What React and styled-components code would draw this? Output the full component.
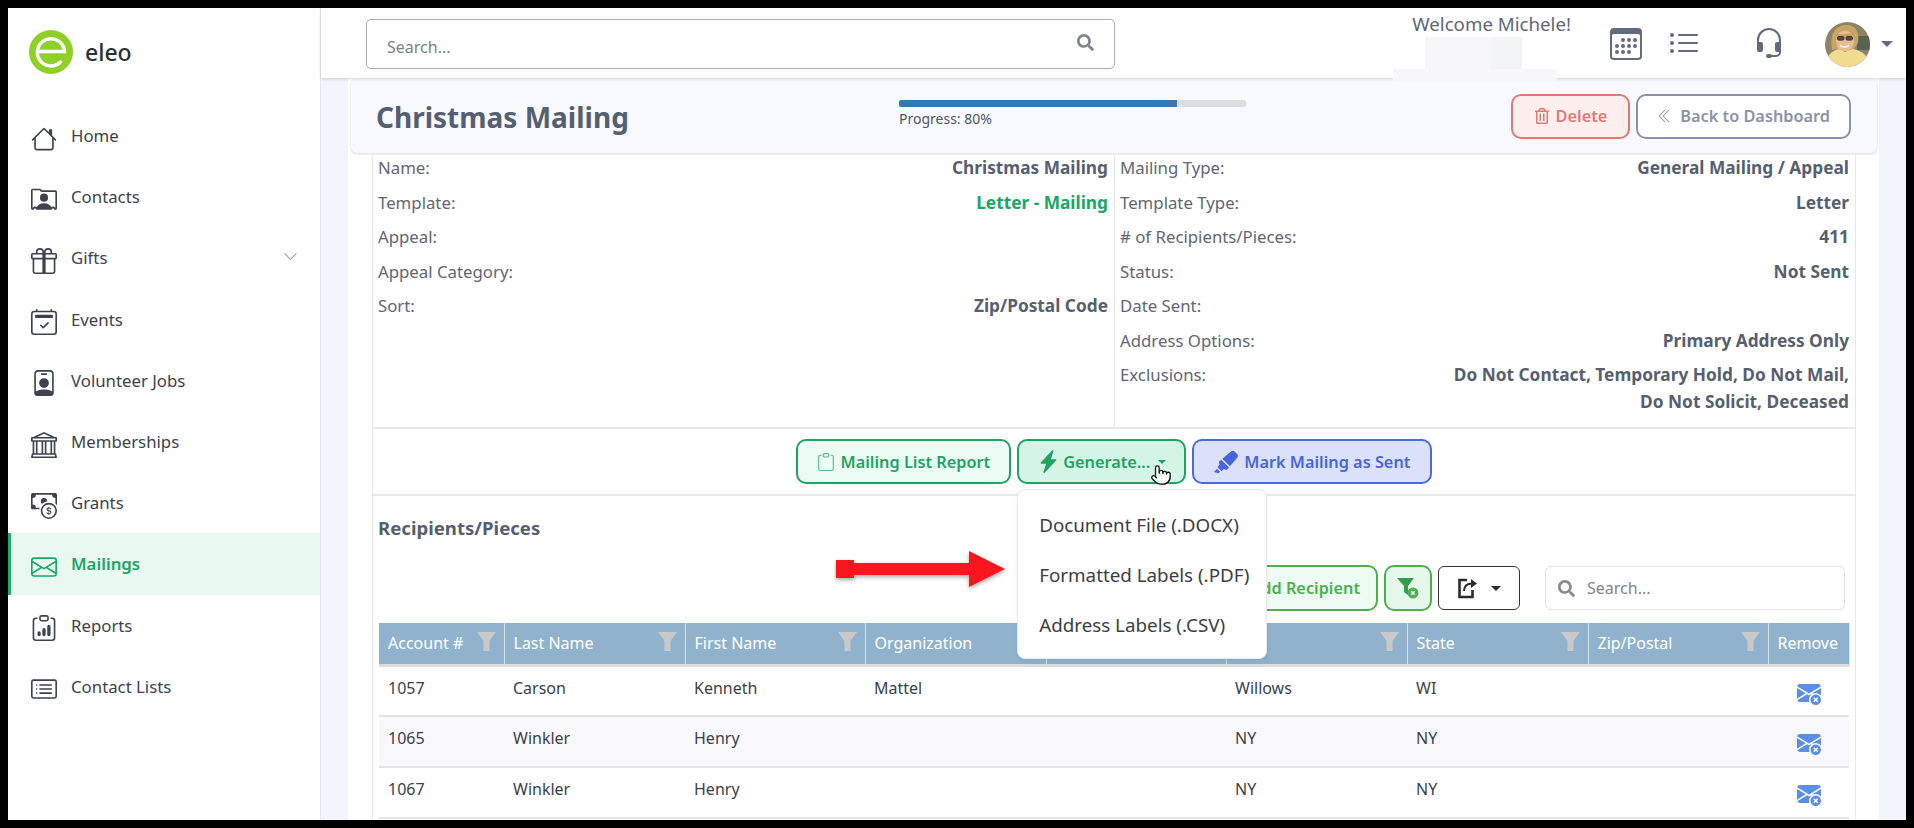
import React from 'react';
import styled, { createGlobalStyle } from 'styled-components';
import { Pointer } from 'lucide-react';
import {
  BsHouse,
  BsPersonRolodex,
  BsGift,
  BsCalendar2Check,
  BsPersonBadge,
  BsBank,
  BsCashCoin,
  BsEnvelope,
  BsClipboardData,
  BsCardList,
  BsChevronDown,
  BsCalendar3,
  BsListUl,
  BsHeadset,
  BsChevronDoubleLeft,
  BsClipboard,
  BsEnvelopeXFill,
  BsLightningChargeFill,
} from 'react-icons/bs';
import { FaSearch, FaRegTrashAlt, FaHighlighter } from 'react-icons/fa';

const GlobalStyle = createGlobalStyle`
  html, body {
    margin: 0;
    height: 100%;
    background: #000;
    overflow: hidden;
  }
  body {
    padding: 8px;
    box-sizing: border-box;
    font-family: "Noto Sans", "Open Sans", sans-serif;
    font-size: 16px;
    color: #5f6675;
  }
  * { box-sizing: border-box; }
`;

const Frame = styled.div`
  width: 1898px;
  height: 812px;
  display: flex;
  overflow: hidden;
  background: #f3f4fc;
`;

const Sidebar = styled.aside`
  width: 313px;
  flex: none;
  background: #fff;
  border-right: 1px solid #e6e7ee;
`;

const Brand = styled.div`
  height: 97px;
  display: flex;
  align-items: center;
  gap: 12px;
  padding: 0 0 9px 21px;
  font-size: 23px;
  font-weight: 500;
  color: #2b2f3a;
`;

const NavItem = styled.div`
  height: 61.2px;
  display: flex;
  align-items: center;
  gap: 14px;
  padding: 0 22px 0 23px;
  font-size: 16.8px;
  color: ${(p) => (p.$active ? '#18a765' : '#3d424e')};
  font-weight: ${(p) => (p.$active ? 600 : 400)};
  background: ${(p) => (p.$active ? '#e9f9f1' : 'transparent')};
  box-shadow: ${(p) => (p.$active ? 'inset 3px 0 0 #1fad66' : 'none')};

  > span {
    flex: 1;
  }
  > svg:first-child {
    margin-top: 6px;
  }
  > svg:last-child {
    margin-top: -2px;
  }
`;

const Main = styled.div`
  flex: 1;
  min-width: 0;
  display: flex;
  flex-direction: column;
`;

const Topbar = styled.header`
  position: relative;
  z-index: 2;
  height: 70px;
  flex: none;
  display: flex;
  align-items: center;
  padding: 2px 13px 0 45px;
  background: #fff;
  box-shadow: 0 1px 3px rgba(0, 0, 0, 0.16);
`;

const SearchBox = styled.div`
  width: 749px;
  height: 50px;
  display: flex;
  align-items: center;
  justify-content: space-between;
  padding: 5px 20px 0 20px;
  border: 1px solid #a9acb5;
  border-radius: 5px;
  color: #7a7f8a;

  svg {
    color: #7c8594;
    margin-top: -8px;
  }
`;

const UserArea = styled.div`
  margin-left: auto;
  align-self: stretch;
  display: flex;
  align-items: center;
  color: #5f6675;
`;

const Welcome = styled.div`
  align-self: flex-start;
  margin-top: 2px;
  margin-right: 39px;
  font-size: 18.7px;
  line-height: 24px;
`;

const TopIcon = styled.div`
  display: flex;
  margin-right: ${(p) => p.$gap}px;
  color: #626b7b;
`;

const Caret = styled.span`
  width: 0;
  height: 0;
  margin-left: ${(p) => p.$ml || 0}px;
  border-left: ${(p) => p.$size || 5}px solid transparent;
  border-right: ${(p) => p.$size || 5}px solid transparent;
  border-top: ${(p) => p.$size || 5}px solid ${(p) => p.$color || 'currentColor'};
`;

/* the smudges left in the picture where something was blanked out */
const Patch = styled.div`
  position: absolute;
  left: ${(p) => p.$x}px;
  top: ${(p) => p.$y}px;
  width: ${(p) => p.$w}px;
  height: ${(p) => p.$h}px;
  background: ${(p) => p.$c};
`;

const Content = styled.main`
  flex: 1;
  min-height: 0;
  padding: 0 27px;
  overflow: hidden;
`;

const Panel = styled.div`
  background: #fff;
  height: 100%;
  padding-top: 1px;
`;

const HeaderCard = styled.div`
  height: 74px;
  margin: 0 2px 0 3px;
  display: grid;
  grid-template-columns: 523px 347px 1fr;
  align-items: center;
  padding-left: 25px;
  padding-right: 26px;
  background: #f8f9fe;
  border-radius: 6px;
  box-shadow: 0 1px 3px rgba(0, 0, 0, 0.16);
`;

const Title = styled.h1`
  margin: 2px 0 0;
  font-size: 28px;
  font-weight: 700;
  color: #565f70;
`;

const Progress = styled.div`
  font-size: 14px;
  line-height: 19px;
  color: #4f5562;
  padding-bottom: 5px;
`;

const Track = styled.div`
  height: 7px;
  margin-bottom: 2px;
  background: #dcdde1;
  border-radius: 2px;
  overflow: hidden;

  div {
    height: 100%;
    background: #3378b5;
  }
`;

const HeaderActions = styled.div`
  display: flex;
  justify-content: flex-end;
  gap: 6px;
`;

const Button = styled.button`
  height: ${(p) => p.$h || 45}px;
  padding: 0 ${(p) => p.$px || 16}px;
  display: inline-flex;
  align-items: center;
  justify-content: center;
  gap: ${(p) => p.$gap || 6}px;
  border: 2px solid ${(p) => p.$line};
  border-radius: 10px;
  background: ${(p) => p.$bg};
  color: ${(p) => p.$ink};
  font-family: inherit;
  font-size: 16.3px;
  font-weight: 600;
  white-space: nowrap;
`;

const Inner = styled.div`
  margin: 0 23px 0 24px;
  border-left: 1px solid #e6e7ec;
  border-right: 1px solid #e6e7ec;
`;

const Details = styled.div`
  display: grid;
  grid-template-columns: 741px 1fr;
  height: 276px;
  border-bottom: 2px solid #e8e8ee;
`;

const DetailCol = styled.div`
  padding: 1px 6px 0 5px;
  border-left: ${(p) => (p.$divided ? '1px solid #e6e7ec' : 'none')};
`;

const DetailRow = styled.div`
  display: flex;
  justify-content: space-between;
  gap: 20px;
  line-height: 27px;
  margin-bottom: 7.5px;
`;

const Label = styled.span`
  font-size: 16.8px;
  color: #5f6675;
  white-space: nowrap;
`;

const Value = styled.span`
  font-size: 17.3px;
  font-weight: 700;
  text-align: right;
  color: ${(p) => (p.$green ? '#18a765' : '#565f70')};
`;

const ActionRow = styled.div`
  height: 67px;
  display: flex;
  justify-content: center;
  align-items: center;
  gap: 6px;
  border-bottom: 2px solid #e8e8ee;
`;

const GenerateWrap = styled.div`
  position: relative;
  z-index: 1;
`;

const HandCursor = styled.div`
  position: absolute;
  left: 133px;
  top: 25px;
  display: flex;
`;

const Dropdown = styled.div`
  position: absolute;
  left: 0;
  top: 50px;
  width: 250px;
  height: 170px;
  padding: 10px 0 0 21px;
  background: #fff;
  border: 1px solid #e8e8ee;
  border-radius: 8px;
  box-shadow: 0 2px 5px rgba(0, 0, 0, 0.06);
  font-size: 18.8px;
  color: #3a3e47;
`;

const DropItem = styled.div`
  height: 50px;
  line-height: 50px;
  white-space: nowrap;
`;

const Section = styled.section`
  position: relative;
  padding: 18px 6px 0 6px;
`;

const SectionTitle = styled.div`
  font-size: 18.6px;
  font-weight: 700;
  line-height: 27px;
  color: #565f70;
  margin-left: -1px;
`;

const Toolbar = styled.div`
  margin-top: 24px;
  padding-right: 4px;
  height: 46px;
  display: flex;
  justify-content: flex-end;
  align-items: center;
  gap: 6px;
`;

const ArrowMark = styled.svg`
  position: absolute;
  left: 461px;
  top: 53px;
`;

const ExportButton = styled.button`
  width: 82px;
  height: 44px;
  display: flex;
  align-items: center;
  justify-content: center;
  gap: 12px;
  border: 1px solid #333;
  border-radius: 6px;
  background: #fff;
  color: #2b2b2b;
`;

const TableSearch = styled.div`
  width: 300px;
  height: 44px;
  margin-left: 19px;
  display: flex;
  align-items: center;
  gap: 12px;
  padding-left: 12px;
  border: 1px solid #e2e2e6;
  border-radius: 6px;
  color: #7f838c;
`;

const Table = styled.table`
  width: 1470px;
  margin-top: 12px;
  table-layout: fixed;
  border-collapse: collapse;
`;

const Th = styled.th`
  width: ${(p) => p.$w}px;
  height: 42px;
  padding: 0 9px;
  background: #90b2cc;
  border-right: 1px solid #d5e0ea;
  border-bottom: 3px solid #dddddf;
  color: #fff;
  font-weight: 400;
  text-align: left;
  white-space: nowrap;

  div {
    display: flex;
    align-items: center;
    justify-content: space-between;
  }
  svg {
    margin-right: -1px;
    margin-top: -4px;
  }
`;

const Td = styled.td`
  height: 51px;
  padding: 8px 9px 0;
  vertical-align: top;
  line-height: 27px;
  color: #3a3f4c;
  white-space: nowrap;
  text-align: ${(p) => (p.$center ? 'center' : 'left')};
  border-bottom: 2px solid #e4e4e8;

  svg {
    color: #5b8ee6;
    margin-top: 6px;
    display: inline-block;
  }
`;

const Tr = styled.tr`
  background: ${(p) => (p.$alt ? '#f9f9fb' : '#fff')};
`;

const navItems = [
  { label: 'Home', icon: BsHouse },
  { label: 'Contacts', icon: BsPersonRolodex },
  { label: 'Gifts', icon: BsGift, more: true },
  { label: 'Events', icon: BsCalendar2Check },
  { label: 'Volunteer Jobs', icon: BsPersonBadge },
  { label: 'Memberships', icon: BsBank },
  { label: 'Grants', icon: BsCashCoin },
  { label: 'Mailings', icon: BsEnvelope, active: true },
  { label: 'Reports', icon: BsClipboardData },
  { label: 'Contact Lists', icon: BsCardList },
];

const leftDetails = [
  ['Name:', 'Christmas Mailing'],
  ['Template:', 'Letter - Mailing', true],
  ['Appeal:', ''],
  ['Appeal Category:', ''],
  ['Sort:', 'Zip/Postal Code'],
];

const rightDetails = [
  ['Mailing Type:', 'General Mailing / Appeal'],
  ['Template Type:', 'Letter'],
  ['# of Recipients/Pieces:', '411'],
  ['Status:', 'Not Sent'],
  ['Date Sent:', ''],
  ['Address Options:', 'Primary Address Only'],
];

const columns = [
  ['Account #', 125],
  ['Last Name', 181],
  ['First Name', 180],
  ['Organization', 181],
  ['', 180],
  ['City', 181],
  ['State', 181],
  ['Zip/Postal', 180],
  ['Remove', 81],
];

const rows = [
  ['1057', 'Carson', 'Kenneth', 'Mattel', '', 'Willows', 'WI', ''],
  ['1065', 'Winkler', 'Henry', '', '', 'NY', 'NY', ''],
  ['1067', 'Winkler', 'Henry', '', '', 'NY', 'NY', ''],
];

function Logo() {
  return (
    <svg width="44" height="44" viewBox="0 0 44 44">
      <circle cx="22" cy="22" r="22" fill="#8ed124" />
      <path
        d="M8.5 21.5H35.5A13.6 13.6 0 1 0 31.5 32"
        fill="none"
        stroke="#fff"
        strokeWidth="3.4"
        strokeLinecap="round"
      />
    </svg>
  );
}

function Avatar() {
  return (
    <svg width="45" height="45" viewBox="0 0 45 45">
      <clipPath id="avatar-clip">
        <circle cx="22.5" cy="22.5" r="22.5" />
      </clipPath>
      <g clipPath="url(#avatar-clip)">
        <rect width="45" height="45" fill="#8a8468" />
        <rect x="32" y="14" width="13" height="14" fill="#5a6350" />
        <path d="M7 28C4 10 12 3 21 3s14 6 12 18l-4 6H12z" fill="#c9a564" />
        <ellipse cx="20" cy="19" rx="9" ry="10.5" fill="#e8bd96" />
        <path d="M11 13c4 1 12 1 17-1" stroke="#c9a564" strokeWidth="3" fill="none" />
        <rect x="12.5" y="14.5" width="6.5" height="3.6" rx="1.4" fill="#5a4a40" stroke="#3a3230" strokeWidth="1" />
        <rect x="21" y="14.5" width="6.5" height="3.6" rx="1.4" fill="#5a4a40" stroke="#3a3230" strokeWidth="1" />
        <path d="M15 23.5c3 2 6 2 9 0" stroke="#fff" strokeWidth="1.5" fill="none" />
        <path d="M0 45c0-11 8-17 14-18l6 3 7-3c8 1 18 6 18 18z" fill="#f1dc92" />
      </g>
    </svg>
  );
}

function FunnelIcon() {
  return (
    <svg width="19" height="19" viewBox="0 0 19 19">
      <path d="M0 0h19l-6.5 9v10h-6V9z" fill="#c9c9c9" />
    </svg>
  );
}

function ClearFilterIcon() {
  return (
    <svg width="24" height="22" viewBox="0 0 24 22">
      <path d="M1 1h17l-6 8v9l-4-3V9z" fill="#2f9e48" />
      <circle cx="17" cy="16" r="5.5" fill="#4cb050" />
      <path d="M15.2 14.2l3.6 3.6m0-3.6l-3.6 3.6" stroke="#fff" strokeWidth="1.3" />
    </svg>
  );
}

function ExportIcon() {
  return (
    <svg width="22" height="22" viewBox="0 0 22 22">
      <path d="M10 3H2.5v17h13v-7" fill="none" stroke="#2b2b2b" strokeWidth="2.6" />
      <path d="M7 14c0-5 3-7.5 8-7.5" fill="none" stroke="#2b2b2b" strokeWidth="2" />
      <path d="M14 2l6 4.5-6 4.5z" fill="#2b2b2b" />
    </svg>
  );
}

function App() {
  return (
    <>
      <GlobalStyle />
      <Frame>
        <Sidebar>
          <Brand>
            <Logo />
            eleo
          </Brand>
          {navItems.map((item) => (
            <NavItem key={item.label} $active={item.active}>
              <item.icon size={26} />
              <span>{item.label}</span>
              {item.more && <BsChevronDown size={15} color="#8a97ad" />}
            </NavItem>
          ))}
        </Sidebar>

        <Main>
          <Topbar>
            <SearchBox>
              Search...
              <FaSearch size={17} />
            </SearchBox>
            <UserArea>
              <Welcome>Welcome Michele!</Welcome>
              <TopIcon $gap={26}>
                <BsCalendar3 size={32} />
              </TopIcon>
              <TopIcon $gap={53}>
                <BsListUl size={32} />
              </TopIcon>
              <TopIcon $gap={40}>
                <BsHeadset size={32} />
              </TopIcon>
              <TopIcon $gap={11}>
                <Avatar />
              </TopIcon>
              <Caret $size={6} $color="#626b7b" />
            </UserArea>
            <Patch $x={1104} $y={29} $w={65} $h={32} $c="#f7f7f9" />
            <Patch $x={1169} $y={29} $w={32} $h={32} $c="#f3f4f6" />
            <Patch $x={1072} $y={61} $w={164} $h={13} $c="#f6f6fb" />
          </Topbar>

          <Content>
            <Panel>
              <HeaderCard>
                <Title>Christmas Mailing</Title>
                <Progress>
                  <Track>
                    <div style={{ width: '80%' }} />
                  </Track>
                  Progress: 80%
                </Progress>
                <HeaderActions>
                  <Button $line="#dd7a76" $bg="#fdeeee" $ink="#de7b78" $px={21}>
                    <FaRegTrashAlt size={16} />
                    Delete
                  </Button>
                  <Button $line="#8593a8" $bg="#fff" $ink="#8794a8" $px={19} $gap={7}>
                    <BsChevronDoubleLeft size={16} />
                    Back to Dashboard
                  </Button>
                </HeaderActions>
              </HeaderCard>

              <Inner>
                <Details>
                  <DetailCol>
                    {leftDetails.map(([label, value, green]) => (
                      <DetailRow key={label}>
                        <Label>{label}</Label>
                        <Value $green={green}>{value}</Value>
                      </DetailRow>
                    ))}
                  </DetailCol>
                  <DetailCol $divided>
                    {rightDetails.map(([label, value]) => (
                      <DetailRow key={label}>
                        <Label>{label}</Label>
                        <Value>{value}</Value>
                      </DetailRow>
                    ))}
                    <DetailRow>
                      <Label>Exclusions:</Label>
                      <Value>
                        Do Not Contact, Temporary Hold, Do Not Mail,
                        <br />
                        Do Not Solicit, Deceased
                      </Value>
                    </DetailRow>
                  </DetailCol>
                </Details>

                <ActionRow>
                  <Button $line="#1ea362" $bg="#ecfbf4" $ink="#1ea362" $px={19}>
                    <BsClipboard size={18} color="#5fb887" />
                    Mailing List Report
                  </Button>
                  <GenerateWrap>
                    <Button $line="#1ea362" $bg="#d4f5e5" $ink="#1ea362" $px={18} $gap={3}>
                      <BsLightningChargeFill size={23} />
                      Generate...
                      <Caret $size={4.5} $ml={5} />
                    </Button>
                    <HandCursor>
                      <Pointer size={22} fill="#fff" stroke="#111" strokeWidth={1.4} />
                    </HandCursor>
                    <Dropdown>
                      <DropItem>Document File (.DOCX)</DropItem>
                      <DropItem>Formatted Labels (.PDF)</DropItem>
                      <DropItem>Address Labels (.CSV)</DropItem>
                    </Dropdown>
                  </GenerateWrap>
                  <Button $line="#4a6ae0" $bg="#dce1fb" $ink="#4664e0" $px={20}>
                    <FaHighlighter size={24} />
                    Mark Mailing as Sent
                  </Button>
                </ActionRow>

                <Section>
                  <SectionTitle>Recipients/Pieces</SectionTitle>
                  <ArrowMark width="180" height="46" viewBox="0 0 180 46">
                    <defs>
                      <filter id="arrow-shadow" x="-10%" y="-20%" width="120%" height="160%">
                        <feDropShadow dx="0" dy="2" stdDeviation="2" floodOpacity="0.35" />
                      </filter>
                    </defs>
                    <path
                      d="M2 11H20V14H135V2L171 20 135 38V26H20V29H2z"
                      fill="#f9141a"
                      filter="url(#arrow-shadow)"
                    />
                  </ArrowMark>
                  <Toolbar>
                    <Button $line="#4cb050" $bg="#edfbf2" $ink="#4cb050" $h={46}>
                      Add Recipient
                    </Button>
                    <Button $line="#4cb050" $bg="#e6f8ec" $ink="#4cb050" $h={46} $px={10}>
                      <ClearFilterIcon />
                    </Button>
                    <ExportButton>
                      <ExportIcon />
                      <Caret $size={5} />
                    </ExportButton>
                    <TableSearch>
                      <FaSearch size={17} color="#8a8a8a" />
                      Search...
                    </TableSearch>
                  </Toolbar>

                  <Table>
                    <thead>
                      <tr>
                        {columns.map(([name, w], i) => (
                          <Th key={i} $w={w}>
                            <div>
                              {name}
                              {name !== 'Remove' && <FunnelIcon />}
                            </div>
                          </Th>
                        ))}
                      </tr>
                    </thead>
                    <tbody>
                      {rows.map((row, i) => (
                        <Tr key={row[0]} $alt={i === 1}>
                          {row.map((cell, j) => (
                            <Td key={j}>{cell}</Td>
                          ))}
                          <Td $center>
                            <BsEnvelopeXFill size={24} />
                          </Td>
                        </Tr>
                      ))}
                    </tbody>
                  </Table>
                </Section>
              </Inner>
            </Panel>
          </Content>
        </Main>
      </Frame>
    </>
  );
}

export default App;
